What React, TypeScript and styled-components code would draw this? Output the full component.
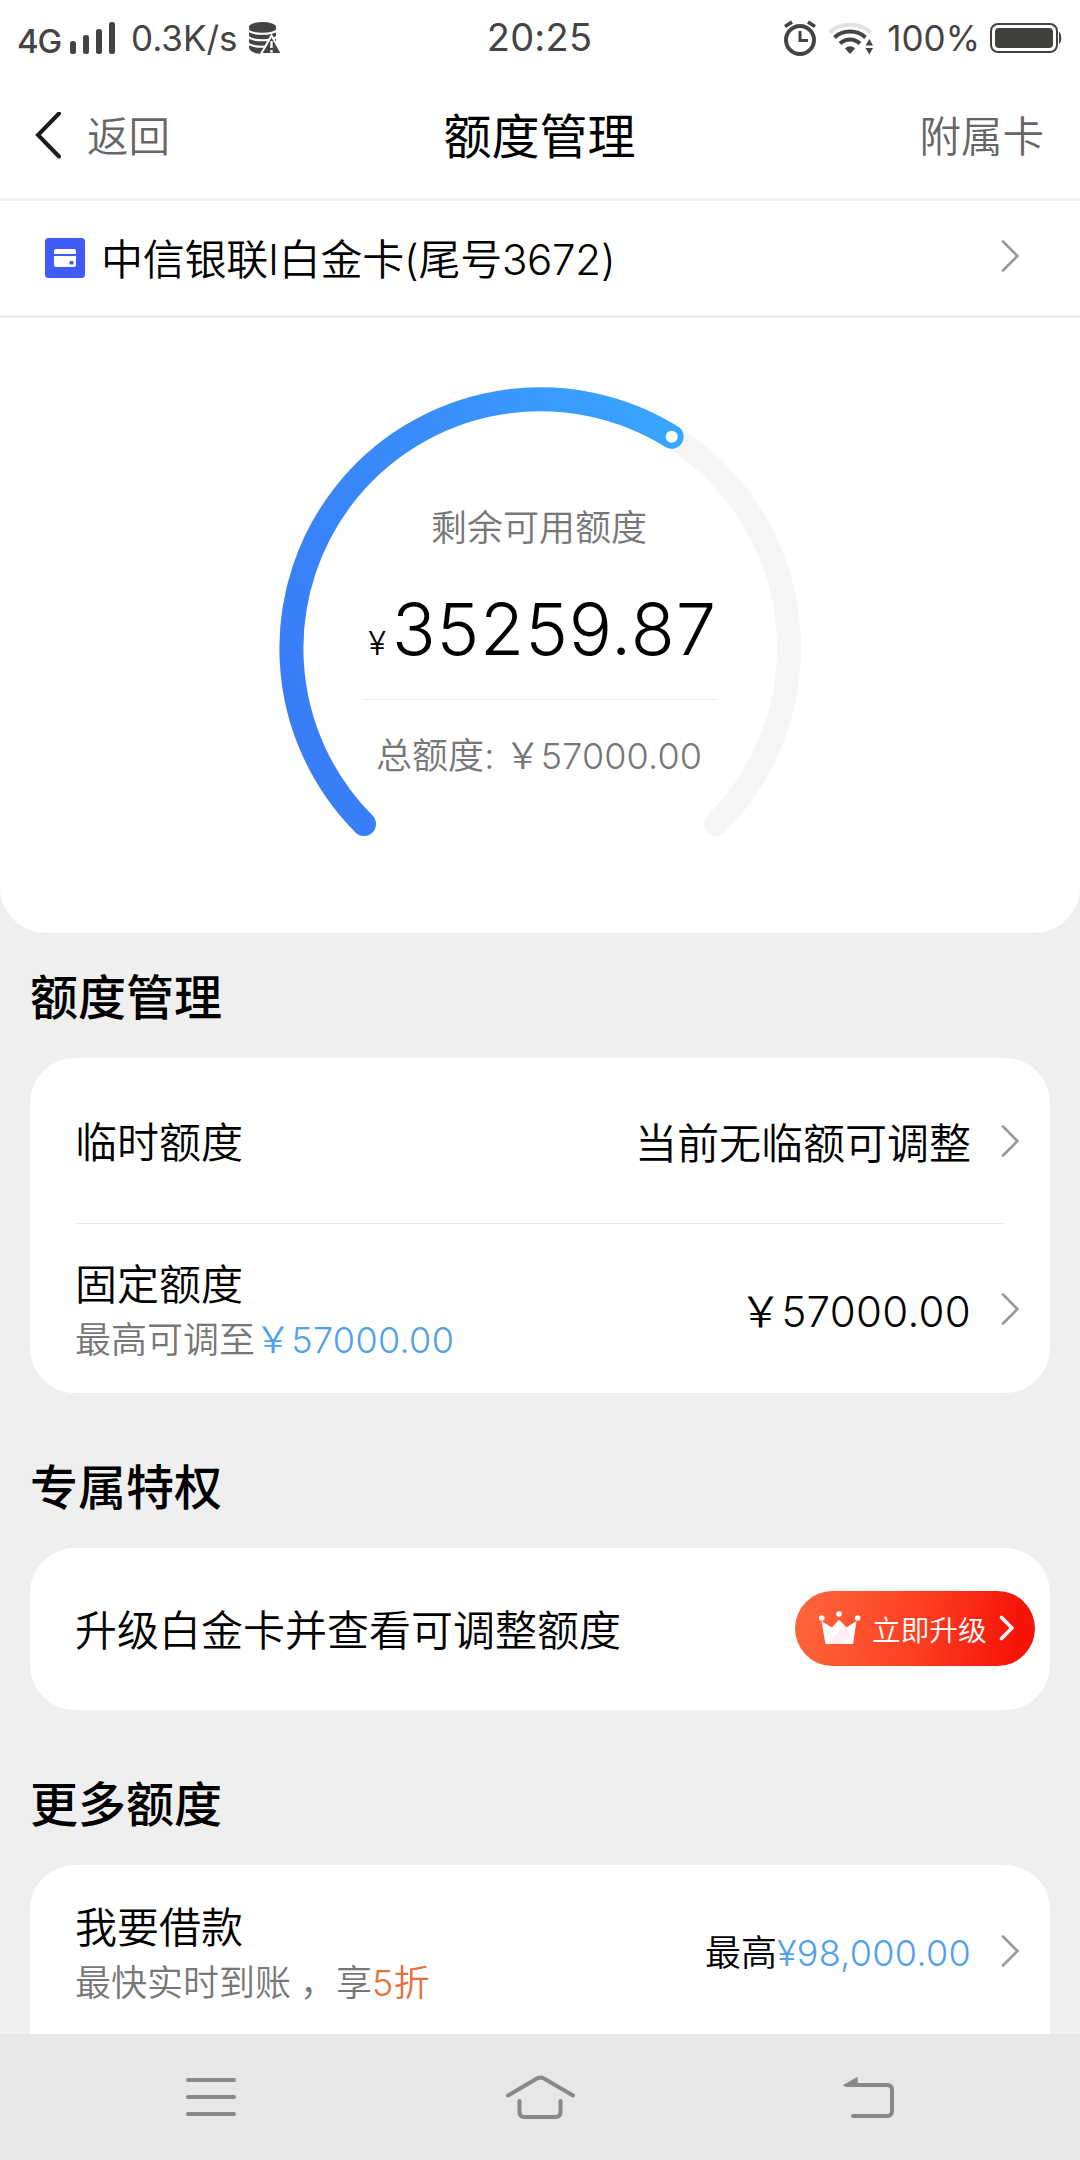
import React from "react";
import styled, { createGlobalStyle } from "styled-components";

const GlobalStyle = createGlobalStyle`
  * {
    box-sizing: border-box;
  }

  body {
    margin: 0;
    background: #efefef;
    font-family: Inter, "Noto Sans CJK SC", sans-serif;
    font-weight: 350;
    color: #000;
  }
`;

const Chevron = () => (
  <svg width="18" height="32" viewBox="0 0 18 32" fill="none">
    <path d="M2 1.5L16.5 16L2 30.5" stroke="#999" strokeWidth="2.6" strokeLinecap="round" />
  </svg>
);

const SignalIcon = () => (
  <svg width="46" height="34" viewBox="0 0 46 34" fill="#444">
    <rect x="0" y="20" width="6" height="13" rx="2.5" />
    <rect x="13" y="14" width="6" height="19" rx="2.5" />
    <rect x="26" y="8" width="6" height="25" rx="2.5" />
    <rect x="39" y="1" width="6" height="32" rx="2.5" />
  </svg>
);

const DataIcon = () => (
  <svg width="33" height="34" viewBox="0 0 33 34">
    <path d="M0 5V26C0 30 6 33 13.5 33S27 30 27 26V5Z" fill="#444" />
    <ellipse cx="13.5" cy="6" rx="13.5" ry="5" fill="#444" />
    <g fill="none" stroke="#fff" strokeWidth="2.2">
      <path d="M-1 9C3 14 24 14 28 9" />
      <path d="M-1 15.5C3 20.5 24 20.5 28 15.5" />
      <path d="M-1 22C3 27 24 27 28 22" />
    </g>
    <path d="M22.5 14.5L33 33H12Z" fill="#444" stroke="#fff" strokeWidth="2" />
    <path d="M22.5 20V27M22.5 29V31.5" stroke="#fff" strokeWidth="2.4" />
  </svg>
);

const AlarmIcon = () => (
  <svg width="34" height="36" viewBox="0 0 34 36" fill="none" stroke="#444">
    <circle cx="17" cy="20" r="14" strokeWidth="4" />
    <path d="M17 11V20.5H25" strokeWidth="3" />
    <path d="M2 6.5L9 2M25 2L32 6.5" strokeWidth="3.6" />
  </svg>
);

const WifiIcon = () => (
  <svg width="46" height="34" viewBox="0 0 46 34" fill="none">
    <path d="M1.5 11.5C12 1 32 1 42.5 11.5" stroke="#e2e2e2" strokeWidth="4" />
    <path d="M6.5 16.5C14.5 8.5 29.5 8.5 37.5 16.5" stroke="#444" strokeWidth="4" />
    <path d="M12 22.5C17.5 17 26.5 17 32 22.5" stroke="#444" strokeWidth="4" />
    <path d="M17 27.5C20 24.5 24 24.5 27 27.5L22 33Z" fill="#444" />
    <path d="M37.5 24.5L41.3 18L45 24.5ZM37.5 27H45L41.3 33.5Z" fill="#444" />
  </svg>
);

const BatteryIcon = () => (
  <svg width="72" height="30" viewBox="0 0 72 30">
    <rect x="1" y="1" width="66" height="28" rx="7" fill="none" stroke="#444" strokeWidth="2" />
    <rect x="5" y="5" width="58" height="20" rx="4" fill="#40403c" />
    <path d="M69 9C72 10 72 20 69 21Z" fill="#444" />
  </svg>
);

const BankCardIcon = () => (
  <svg width="40" height="40" viewBox="0 0 40 40">
    <rect width="40" height="40" rx="3.5" fill="#3f5bfd" />
    <path d="M9 16V13Q9 11 11 11H29Q31 11 31 13V16Z" fill="#fff" />
    <path d="M9 18H31V27Q31 29 29 29H11Q9 29 9 27Z" fill="#fff" />
    <rect x="24.5" y="23" width="4" height="3.5" rx="1" fill="#3f5bfd" />
  </svg>
);

const CrownIcon = () => (
  <svg width="42" height="34" viewBox="0 0 42 34" fill="#fff">
    <circle cx="2.8" cy="7" r="2.8" />
    <circle cx="20" cy="3" r="2.8" />
    <circle cx="38.7" cy="7" r="2.8" />
    <path d="M2.5 10L13 16.5L20 8.5L27.5 16.5L37.5 10L34 33H6.5Z" />
    <path d="M20 8.5L26 15L14 26L11.5 33H21L32 25L27.5 16.5Z" fill="#ffe9ee" opacity=".8" />
  </svg>
);

const Gauge = () => (
  <GaugeBox>
    <GaugeArc viewBox="0 0 524 450" fill="none" strokeLinecap="round" strokeWidth="24">
      <defs>
        <linearGradient id="progress" x1="0" y1="250" x2="400" y2="50" gradientUnits="userSpaceOnUse">
          <stop offset="0" stopColor="#387ef8" />
          <stop offset="0.5" stopColor="#398dfb" />
          <stop offset="1" stopColor="#38a6ff" />
        </linearGradient>
      </defs>
      <path d="M86 437A249 249 0 1 1 438 437" stroke="#f5f5f5" />
      <path d="M86 437A249 249 0 0 1 393.7 49.7" stroke="url(#progress)" />
      <circle cx="393.7" cy="49.7" r="6" fill="#fff" />
    </GaugeArc>
    <GaugeContent>
      <GaugeLabel>剩余可用额度</GaugeLabel>
      <Amount>
        <small>¥</small>35259.87
      </Amount>
      <Total>总额度: ￥57000.00</Total>
    </GaugeContent>
  </GaugeBox>
);

const App = () => (
  <Screen>
    <GlobalStyle />
    <StatusBar>
      <StatusGroup>
        <Network>4G</Network>
        <SignalIcon />
        <Speed>0.3K/s</Speed>
        <DataIcon />
      </StatusGroup>
      <Time>20:25</Time>
      <StatusGroup $end>
        <AlarmIcon />
        <Wifi>
          <WifiIcon />
        </Wifi>
        <Percent>100%</Percent>
        <BatteryIcon />
      </StatusGroup>
    </StatusBar>
    <Header>
      <Back>
        <svg width="26" height="48" viewBox="0 0 26 48" fill="none">
          <path d="M24 1.5L3 23L24 44.5" stroke="#1c1c1c" strokeWidth="4" strokeLinecap="round" />
        </svg>
        <HeaderText>返回</HeaderText>
      </Back>
      <Title>额度管理</Title>
      <HeaderText $end>附属卡</HeaderText>
    </Header>
    <CardSelect>
      <BankCardIcon />
      <CardName>中信银联I白金卡(尾号3672)</CardName>
      <CardArrow>
        <Chevron />
      </CardArrow>
    </CardSelect>
    <GaugePanel>
      <Gauge />
    </GaugePanel>
    <Content>
      <SectionTitle>额度管理</SectionTitle>
      <Card>
        <Row $height={165}>
          <Label>临时额度</Label>
          <Value>当前无临额可调整</Value>
          <Chevron />
        </Row>
        <Divider />
        <Row $height={169}>
          <div>
            <Label>固定额度</Label>
            <Hint>
              最高可调至<Blue>￥57000.00</Blue>
            </Hint>
          </div>
          <Value>
            ￥<Num>57000.00</Num>
          </Value>
          <Chevron />
        </Row>
      </Card>
      <SectionTitle>专属特权</SectionTitle>
      <Card>
        <Row $height={162}>
          <Label>升级白金卡并查看可调整额度</Label>
          <UpgradeButton>
            <CrownIcon />
            <span>立即升级</span>
            <svg width="16" height="26" viewBox="0 0 16 26" fill="none">
              <path d="M2.5 2.5L13 13L2.5 23.5" stroke="#fff" strokeWidth="3.6" strokeLinecap="round" strokeLinejoin="round" />
            </svg>
          </UpgradeButton>
        </Row>
      </Card>
      <SectionTitle>更多额度</SectionTitle>
      <Card $open>
        <Row $height={172}>
          <div>
            <Label>我要借款</Label>
            <Hint>
              最快实时到账<Comma>，</Comma>享<Orange>5折</Orange>
            </Hint>
          </div>
          <Value $small>
            最高<Blue>¥98,000.00</Blue>
          </Value>
          <Chevron />
        </Row>
      </Card>
    </Content>
    <NavBar>
      <svg width="50" height="42" viewBox="0 0 50 42" stroke="#888" strokeWidth="4" strokeLinecap="round">
        <path d="M2 4H48M2 21H48M2 38H48" />
      </svg>
      <svg width="70" height="46" viewBox="-1 0 70 46" fill="none" stroke="#888" strokeWidth="4" strokeLinecap="round">
        <path d="M2 21.5L31 4.5Q34.5 2.5 38 4.5L67 21.5" />
        <path d="M13.5 27V38Q13.5 43 18.5 43H49.5Q54.5 43 54.5 38V27" />
      </svg>
      <svg width="52" height="44" viewBox="0 0 52 44" fill="none" stroke="#888" strokeWidth="4" strokeLinecap="round">
        <path d="M4 10H44Q49 10 49 15V36Q49 41 44 41H10" />
        <path d="M1 10.5L14 3V10.5Z" fill="#888" strokeWidth="1.5" strokeLinejoin="round" />
      </svg>
    </NavBar>
  </Screen>
);

export default App;

const Screen = styled.div`
  display: flex;
  flex-direction: column;
  width: 1080px;
  height: 2160px;
  overflow: hidden;
  background: #efefef;

  svg {
    display: block;
    flex-shrink: 0;
  }
`;

const StatusBar = styled.div`
  display: grid;
  grid-template-columns: 1fr auto 1fr;
  height: 73px;
  padding: 0 18px 0 17px;
  background: #fff;
  color: #444;
  font-weight: 400;
`;

const StatusGroup = styled.div<{ $end?: boolean }>`
  display: flex;
  align-items: center;
  justify-content: ${({ $end }) => ($end ? "flex-end" : "flex-start")};
`;

const Network = styled.span`
  width: 53px;
  padding-top: 6px;
  font-size: 33px;
  font-weight: 550;
  letter-spacing: -1.2px;
`;

const Speed = styled.span`
  width: 118px;
  margin-left: 15px;
  font-size: 35px;
  white-space: nowrap;
`;

const Time = styled.span`
  font-size: 38px;
  line-height: 75px;
  letter-spacing: 0.2px;
`;

const Wifi = styled.span`
  margin-left: 11px;
`;

const Percent = styled.span`
  margin: 0 10px 0 13px;
  font-size: 35px;
`;

const Header = styled.header`
  display: grid;
  grid-template-columns: 1fr auto 1fr;
  align-items: center;
  height: 128px;
  padding: 0 36px 0 35px;
  background: #fff;
  border-bottom: 3px solid #efefef;
`;

const Back = styled.div`
  display: flex;
  align-items: center;
  gap: 26px;
`;

const HeaderText = styled.div<{ $end?: boolean }>`
  padding-top: 2px;
  font-size: 41.5px;
  line-height: 60px;
  color: #666;
  text-align: ${({ $end }) => ($end ? "right" : "left")};
`;

const Title = styled.h1`
  margin: 0;
  padding-top: 3px;
  font-size: 48px;
  font-weight: 400;
  line-height: 60px;
`;

const CardSelect = styled.div`
  display: flex;
  align-items: center;
  height: 117px;
  padding: 0 61px 0 45px;
  background: #fff;
  border-bottom: 3px solid #efefef;
`;

const CardName = styled.div`
  flex: 1;
  padding: 4px 0 0 16px;
  font-size: 42px;
  line-height: 60px;
  letter-spacing: -0.25px;
`;

const CardArrow = styled.div`
  padding-bottom: 4px;
`;

const GaugePanel = styled.section`
  display: flex;
  justify-content: center;
  height: 615px;
  padding-top: 69px;
  background: #fff;
  border-radius: 0 0 46px 46px;
`;

const GaugeBox = styled.div`
  display: grid;
  width: 524px;
  height: 450px;

  > * {
    grid-area: 1 / 1;
  }
`;

const GaugeArc = styled.svg`
  width: 524px;
  height: 450px;
`;

const GaugeContent = styled.div`
  width: 354px;
  margin: 0 auto;
  padding-top: 116px;
  text-align: center;
  white-space: nowrap;
`;

const GaugeLabel = styled.div`
  padding-right: 2px;
  font-size: 36px;
  line-height: 50px;
  color: #777;
`;

const Amount = styled.div`
  height: 147px;
  padding: 36px 0 0 5px;
  border-bottom: 1px solid #e8e8e8;
  font-size: 72px;
  line-height: 80px;
  letter-spacing: 0.9px;

  small {
    margin-right: 5px;
    font-size: 33px;
  }
`;

const Total = styled.div`
  padding: 31px 2px 0 0;
  font-size: 36px;
  line-height: 50px;
  color: #777;
  letter-spacing: 0.1px;
`;

const Content = styled.main`
  flex: 1;
  min-height: 0;
  padding: 0 30px;
  overflow: hidden;
`;

const SectionTitle = styled.h2`
  margin: 0;
  padding-top: 35px;
  height: 125px;
  font-size: 48px;
  font-weight: 500;
  line-height: 60px;
`;

const Card = styled.section<{ $open?: boolean }>`
  margin-bottom: 30px;
  padding: 0 31px 0 45px;
  background: #fff;
  border-radius: ${({ $open }) => ($open ? "45px 45px 0 0" : "45px")};
`;

const Row = styled.div<{ $height: number }>`
  display: flex;
  align-items: center;
  justify-content: space-between;
  height: ${({ $height }) => $height}px;
`;

const Divider = styled.div`
  height: 1px;
  margin: 0 15px 0 1px;
  background: #e8e8e8;
`;

const Label = styled.div`
  padding-top: 4px;
  font-size: 42px;
  line-height: 58px;
`;

const Hint = styled.div`
  padding-top: 1px;
  font-size: 36px;
  line-height: 50px;
  color: #777;
`;

const Value = styled.div<{ $small?: boolean }>`
  margin: 0 30px 0 auto;
  padding-top: ${({ $small }) => ($small ? 3 : 6)}px;
  font-size: ${({ $small }) => ($small ? 36 : 42)}px;
  line-height: 60px;
`;

const Num = styled.span`
  letter-spacing: 0.3px;
`;

const Blue = styled.span`
  color: #529fea;
  letter-spacing: 0.3px;
`;

const Orange = styled.span`
  color: #e0733f;
  letter-spacing: 0.3px;
`;

const Comma = styled.span`
  display: inline-block;
  width: 45px;
  text-indent: 9px;
`;

const UpgradeButton = styled.button`
  display: flex;
  align-items: center;
  width: 240px;
  height: 75px;
  margin: 0 -16px 2px 0;
  padding: 0 0 0 24px;
  border: 0;
  border-radius: 38px;
  background: linear-gradient(100deg, #ff6439 5%, #fd4023 50%, #f61308 92%);
  color: #fff;
  font-family: inherit;
  font-size: 28.7px;
  font-weight: 350;

  span {
    margin: 0 12px 0 11px;
  }
`;

const NavBar = styled.nav`
  display: flex;
  justify-content: space-between;
  align-items: center;
  height: 126px;
  padding: 0 185px 0 186px;
  background: #e7e7e7;
`;
